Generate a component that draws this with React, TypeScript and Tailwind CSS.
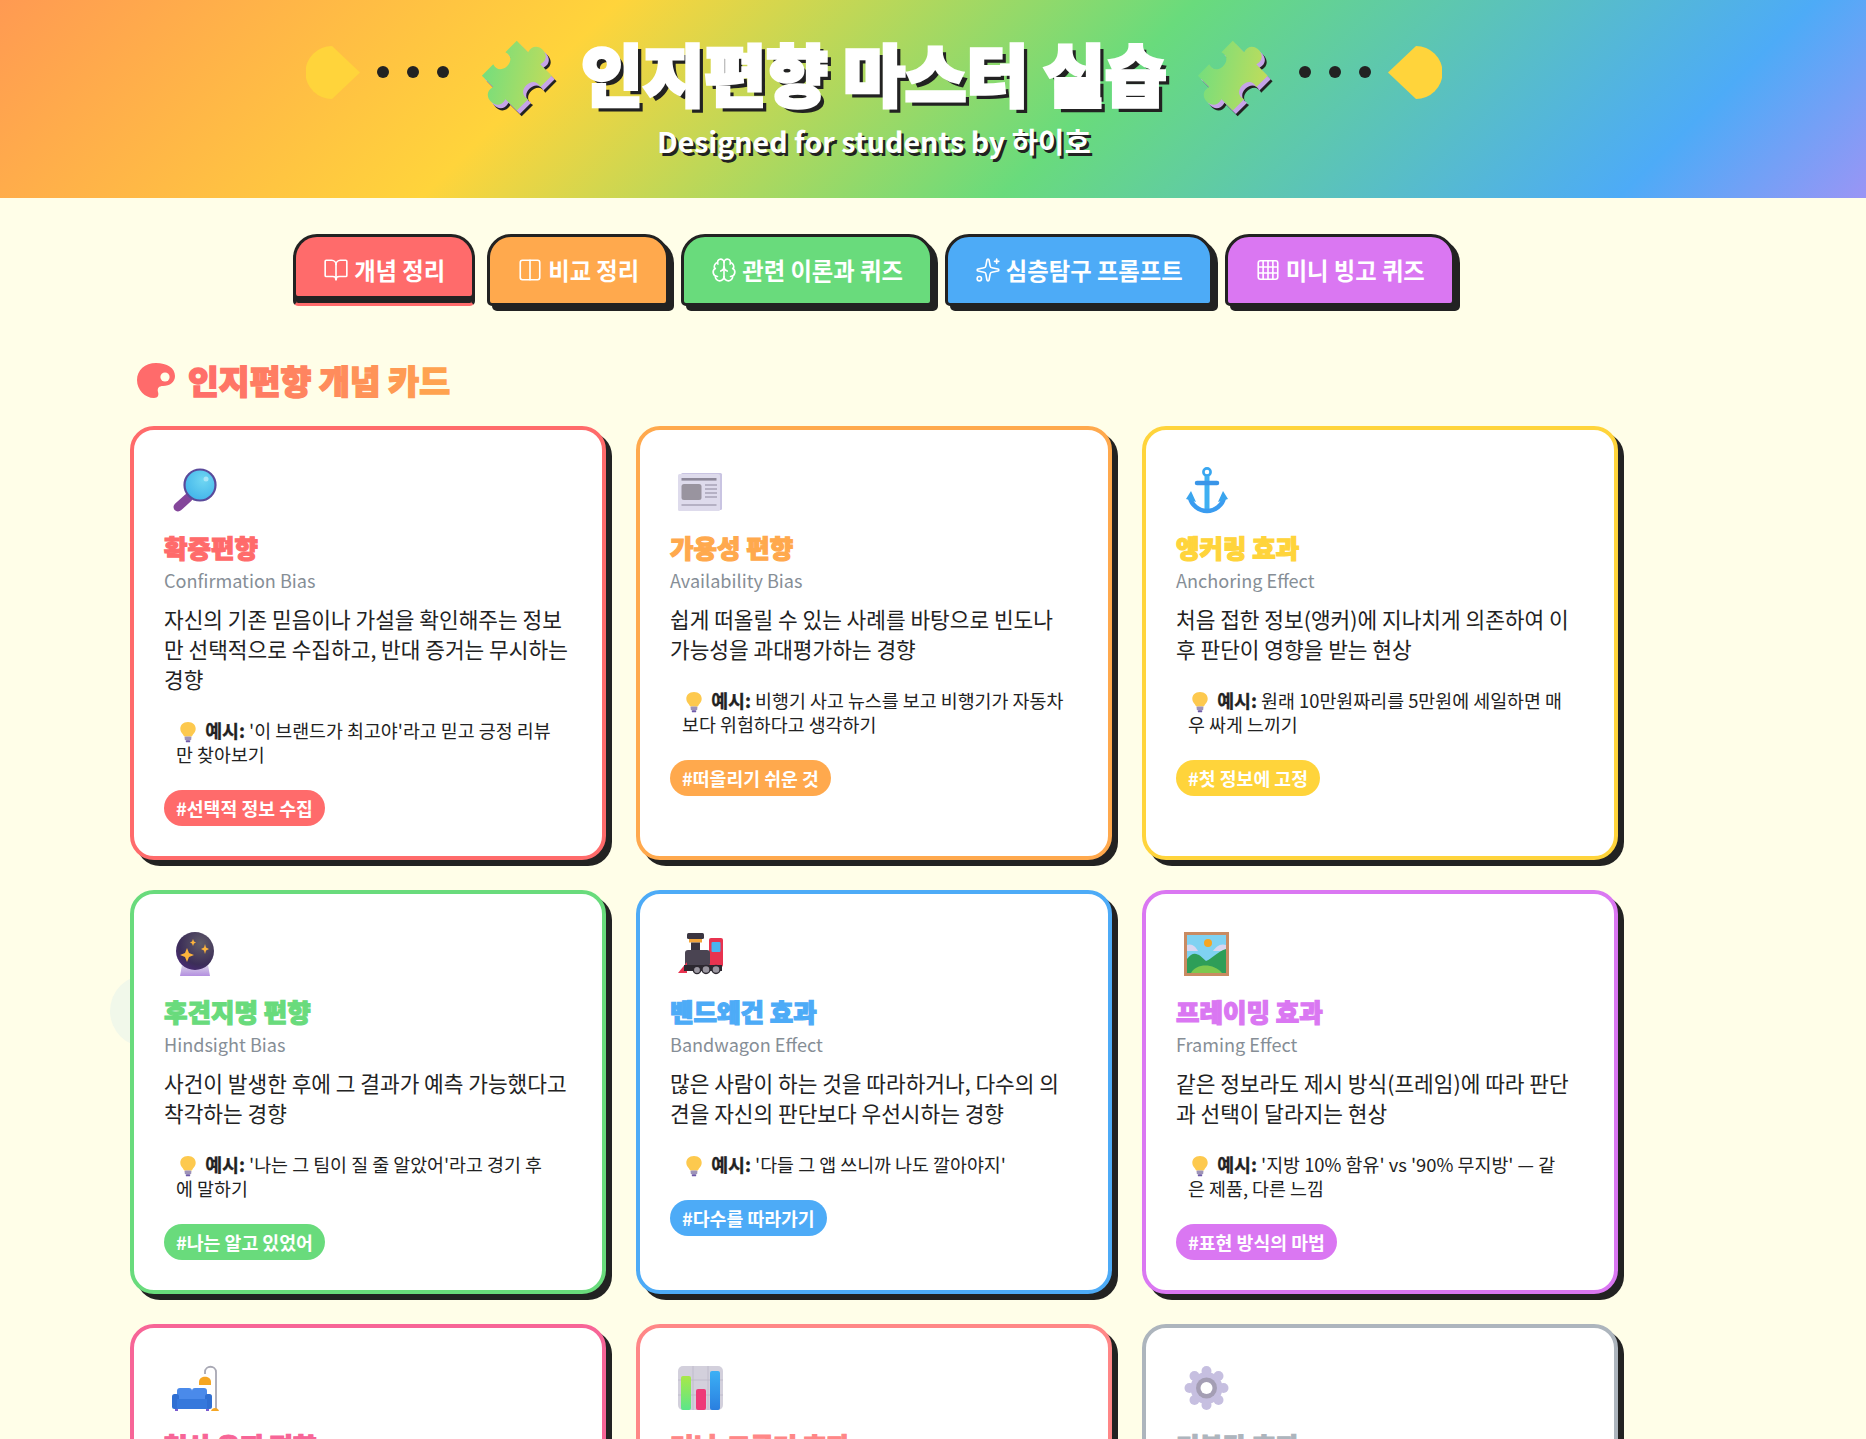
import { BookOpen, Brain, Columns2, Sparkles } from 'lucide-react'
import type { ReactNode } from 'react'

const IconBox = ({ children }: { children: ReactNode }) => (
  <svg viewBox="0 0 48 48" className="w-[48px] h-[48px] ml-2 mt-[7px] block">
    {children}
  </svg>
)

const Magnifier = () => (
  <IconBox>
    <defs>
      <radialGradient id="lens" cx="0.6" cy="0.35" r="0.7">
        <stop offset="0" stopColor="#6fd6f2" />
        <stop offset="1" stopColor="#41b4ea" />
      </radialGradient>
    </defs>
    <path d="M16 31 L6 40" stroke="#84469a" strokeWidth="9" strokeLinecap="round" />
    <circle cx="28" cy="18" r="15.5" fill="url(#lens)" stroke="#5a4a9a" strokeWidth="2.2" />
    <circle cx="34" cy="12" r="2.5" fill="#a8e6f8" />
  </IconBox>
)

const Newspaper = () => (
  <IconBox>
    <rect x="3" y="6" width="41" height="37" rx="1.5" fill="#c9c4e2" />
    <rect x="0" y="7" width="42" height="37" rx="1.5" fill="#dedbec" />
    <rect x="3.5" y="11" width="35" height="2.6" fill="#8d8899" />
    <rect x="3.5" y="17" width="20" height="16" rx="2.5" fill="#99949f" />
    <path d="M27 18h12M27 22h12M27 26h12M27 30h12M3.5 38h35" stroke="#a8a4b6" strokeWidth="1.3" />
  </IconBox>
)

const Anchor = () => (
  <IconBox>
    <circle cx="23" cy="5" r="3.6" fill="none" stroke="#38a6f0" strokeWidth="2.6" />
    <path d="M23 9 V43" stroke="#3fb0f2" strokeWidth="5" />
    <path d="M13 16 H33" stroke="#3a95e8" strokeWidth="4.5" strokeLinecap="round" />
    <path d="M6 30 C7 38 15 44 23 44 C31 44 39 38 40 30" fill="none" stroke="#3a9cf0" strokeWidth="4.5" />
    <path d="M2 32 L7 24 L12 35 Z M44 32 L39 24 L34 35 Z" fill="#3aa5ee" />
  </IconBox>
)

const CrystalBall = () => (
  <IconBox>
    <defs>
      <radialGradient id="ball" cx="0.65" cy="0.3" r="0.8">
        <stop offset="0" stopColor="#5f5b68" />
        <stop offset="0.7" stopColor="#3c2e58" />
        <stop offset="1" stopColor="#4a2a78" />
      </radialGradient>
      <linearGradient id="base" x1="0" y1="0" x2="0" y2="1">
        <stop offset="0" stopColor="#d9d2e8" />
        <stop offset="1" stopColor="#b48fe0" />
      </linearGradient>
    </defs>
    <path d="M10 34 H36 L38 45 H8 Z" fill="url(#base)" />
    <circle cx="23" cy="20" r="19" fill="url(#ball)" />
    <path d="M15 17 L17 22 L22 24 L17 26 L15 31 L13 26 L8 24 L13 22 Z" fill="#fdb43c" />
    <path d="M33 13 L34 16.5 L37 18 L34 19.5 L33 23 L32 19.5 L29 18 L32 16.5 Z" fill="#fdb43c" />
    <path d="M21 8 L22 10.5 L24 11.5 L22 12.5 L21 15 L20 12.5 L18 11.5 L20 10.5 Z" fill="#fdb43c" />
  </IconBox>
)

const Train = () => (
  <IconBox>
    <rect x="31" y="7" width="14" height="29" rx="2" fill="#e8334f" />
    <rect x="33.5" y="11" width="9" height="10" rx="1" fill="#49b4f0" />
    <rect x="9" y="2" width="17" height="6" rx="1.5" fill="#3a3540" />
    <rect x="11" y="8" width="13" height="3.5" fill="#f2a53a" />
    <rect x="13" y="11.5" width="9" height="8" fill="#3a3540" />
    <rect x="7" y="19" width="25" height="16" rx="3" fill="#4a4452" />
    <path d="M0 42 L9 31 L9 42 Z" fill="#e8334f" />
    <rect x="6" y="34" width="38" height="6" fill="#2c2830" />
    <circle cx="19" cy="39" r="3.6" fill="#9a96a0" stroke="#2c2830" strokeWidth="1.4" />
    <circle cx="28" cy="38.5" r="4" fill="#9a96a0" stroke="#2c2830" strokeWidth="1.4" />
    <circle cx="38" cy="38.5" r="4" fill="#9a96a0" stroke="#2c2830" strokeWidth="1.4" />
  </IconBox>
)

const Picture = () => (
  <IconBox>
    <rect x="0" y="1" width="45" height="44" fill="#c98b62" />
    <rect x="3" y="4" width="39" height="38" fill="#7fd2f2" />
    <circle cx="24" cy="12" r="4" fill="#f5a623" />
    <path d="M3 14 C8 12 12 16 14 20 L3 20 Z M42 14 C36 12 32 16 29 20 L42 20 Z" fill="#d8d6f0" />
    <path d="M3 28 C10 18 16 24 22 30 C28 28 34 20 42 18 V42 H3 Z" fill="#2e9e58" />
    <path d="M7 42 C12 32 30 32 38 42 Z" fill="#7cc84e" />
  </IconBox>
)

const Sofa = () => (
  <IconBox>
    <path d="M44 45 V7 C44 0 33 0 33 7 V9" fill="none" stroke="#a8a8b4" strokeWidth="1.8" />
    <path d="M27 17 C27 10 39 10 39 17 V20 H27 Z" fill="#f5a623" />
    <path d="M39 46 C40 42 46 42 47 46 Z" fill="#f5a623" />
    <rect x="5" y="23" width="15" height="14" rx="3" fill="#4a8aea" />
    <rect x="20" y="23" width="15" height="14" rx="3" fill="#4a8aea" />
    <rect x="0" y="29" width="7" height="15" rx="2.5" fill="#2f6fd2" />
    <rect x="33" y="29" width="7" height="15" rx="2.5" fill="#2f6fd2" />
    <rect x="5" y="34" width="30" height="10" fill="#3578dc" />
    <rect x="3" y="44" width="3" height="2" fill="#7a5cd0" />
    <rect x="34" y="44" width="3" height="2" fill="#7a5cd0" />
  </IconBox>
)

const BarChart = () => (
  <IconBox>
    <defs>
      <linearGradient id="barGreen" x1="0" y1="0" x2="0" y2="1">
        <stop offset="0" stopColor="#a8e848" />
        <stop offset="1" stopColor="#5ce68a" />
      </linearGradient>
      <linearGradient id="barBlue" x1="0" y1="0" x2="0" y2="1">
        <stop offset="0" stopColor="#3cb0f5" />
        <stop offset="1" stopColor="#2a7fe0" />
      </linearGradient>
    </defs>
    <rect x="0" y="1" width="45" height="44" rx="5" fill="#d3d0dc" />
    <path d="M15 1V45M30 1V45M0 15H45M0 30H45" stroke="#bcb8c8" strokeWidth="0.8" />
    <rect x="3" y="11" width="10" height="34" rx="2" fill="url(#barGreen)" />
    <rect x="18" y="24" width="10" height="21" rx="2" fill="#ee3a78" />
    <rect x="32" y="6" width="10" height="39" rx="2" fill="url(#barBlue)" />
  </IconBox>
)

const Gear = () => (
  <IconBox>
    <g fill="#c6bfe0">
      <circle cx="22.5" cy="23" r="16" />
      <circle cx="22.5" cy="6" r="5" />
      <circle cx="22.5" cy="40" r="5" />
      <circle cx="5.5" cy="23" r="5" />
      <circle cx="39.5" cy="23" r="5" />
      <circle cx="10.5" cy="11" r="5" />
      <circle cx="34.5" cy="11" r="5" />
      <circle cx="10.5" cy="35" r="5" />
      <circle cx="34.5" cy="35" r="5" />
    </g>
    <circle cx="22.5" cy="23" r="10.5" fill="#a49eb4" />
    <circle cx="22.5" cy="23" r="6" fill="#fff" />
  </IconBox>
)

const Bulb = () => (
  <svg viewBox="0 0 16 20" className="inline-block w-[18px] h-[22px] -my-[4px] ml-[3px] align-[-1px]">
    <path d="M8 1 C3.5 1 1 4 1 7.2 C1 10 3 11 4.5 14 H11.5 C13 11 15 10 15 7.2 C15 4 12.5 1 8 1 Z" fill="#fdc94e" />
    <rect x="5" y="14" width="6" height="3.4" rx="0.8" fill="#9d93b8" />
    <rect x="6" y="17.4" width="4" height="2" rx="0.8" fill="#6e5aa8" />
  </svg>
)

const Puzzle = ({ id }: { id: string }) => {
  const piece =
    'M-20,-20 L-7,-20 C-11,-33 11,-33 7,-20 L20,-20 L20,-7 C8,-11 8,11 20,7 L20,20 L7,20 C11,33 -11,33 -7,20 L-20,20 L-20,7 C-8,11 -8,-11 -20,-7 Z'
  return (
    <svg viewBox="-30 -34 60 60" className="w-[74px] h-[74px] shrink-0 overflow-visible">
      <defs>
        <linearGradient id={id} x1="0" y1="1" x2="1" y2="0">
          <stop offset="0" stopColor="#6ede80" />
          <stop offset="1" stopColor="#c6dc58" />
        </linearGradient>
      </defs>
      <path d={piece} transform="translate(3,3.6) rotate(45)" fill="#222" />
      <path d={piece} transform="translate(1.5,1.8) rotate(45)" fill="#c6a4e8" />
      <path d={piece} transform="translate(-1,-1) rotate(45)" fill={`url(#${id})`} />
    </svg>
  )
}

const Drop = ({ flip }: { flip?: boolean }) => (
  <svg viewBox="0 0 54 53" className={`w-[54px] h-[53px] shrink-0 ${flip ? '' : '-scale-x-100'}`}>
    <path d="M28 0 A26.5 26.5 0 0 1 28 53 L0 26.5 Z" fill="#ffd43b" />
  </svg>
)

const Dots = () => (
  <div className="flex gap-[18px] shrink-0">
    <span className="w-3 h-3 rounded-full bg-[#222]" />
    <span className="w-3 h-3 rounded-full bg-[#222]" />
    <span className="w-3 h-3 rounded-full bg-[#222]" />
  </div>
)

const Palette = () => (
  <svg viewBox="0 0 38 36" className="w-[38px] h-[36px] shrink-0">
    <path
      d="M19 1 C8 1 0 8 0 18 C0 28 8 36 17 36 C21 36 22 33 21 30 C20 26 22 24 26 24 C33 24 38 20 38 14 C38 6 30 1 19 1 Z"
      fill="#ff6b6b"
    />
    <circle cx="28" cy="15" r="4.6" fill="#fffee8" />
  </svg>
)

const GridIcon = () => (
  <svg viewBox="0 0 24 24" fill="none" stroke="currentColor" strokeWidth="1.5" className="w-[26px] h-[26px] shrink-0">
    <rect x="3" y="3.5" width="18" height="17" rx="2" />
    <path d="M7.5 3.5v17M12 3.5v17M16.5 3.5v17M3 9.2h18M3 14.8h18" />
  </svg>
)

const tabs = [
  { label: '개념 정리', bg: 'bg-[#ff6b6b]', icon: <BookOpen size={26} strokeWidth={1.5} />, active: true },
  { label: '비교 정리', bg: 'bg-[#ffa94d]', icon: <Columns2 size={26} strokeWidth={1.5} /> },
  { label: '관련 이론과 퀴즈', bg: 'bg-[#69db7c]', icon: <Brain size={26} strokeWidth={1.5} /> },
  { label: '심층탐구 프롬프트', bg: 'bg-[#4dabf7]', icon: <Sparkles size={26} strokeWidth={1.5} /> },
  { label: '미니 빙고 퀴즈', bg: 'bg-[#da77f2]', icon: <GridIcon /> },
]

// colour steps of the section heading, red to orange
const headingChars = [
  { ch: '인', color: 'text-[#ff6f69]' },
  { ch: '지', color: 'text-[#ff7666]' },
  { ch: '편', color: 'text-[#ff7d63]' },
  { ch: '향', color: 'text-[#ff8460]' },
  { ch: ' ', color: 'text-[#ff8460]' },
  { ch: '개', color: 'text-[#ff8c5c]' },
  { ch: '념', color: 'text-[#ff9358]' },
  { ch: ' ', color: 'text-[#ff9358]' },
  { ch: '카', color: 'text-[#ff9b54]' },
  { ch: '드', color: 'text-[#ffa350]' },
]

const cards = [
  {
    icon: <Magnifier />,
    title: '확증편향',
    en: 'Confirmation Bias',
    desc: '자신의 기존 믿음이나 가설을 확인해주는 정보만 선택적으로 수집하고, 반대 증거는 무시하는 경향',
    example: "'이 브랜드가 최고야'라고 믿고 긍정 리뷰만 찾아보기",
    tag: '#선택적 정보 수집',
    border: 'border-[#ff6b6b]',
    text: 'text-[#ff6b6b]',
    bg: 'bg-[#ff6b6b]',
  },
  {
    icon: <Newspaper />,
    title: '가용성 편향',
    en: 'Availability Bias',
    desc: '쉽게 떠올릴 수 있는 사례를 바탕으로 빈도나 가능성을 과대평가하는 경향',
    example: '비행기 사고 뉴스를 보고 비행기가 자동차보다 위험하다고 생각하기',
    tag: '#떠올리기 쉬운 것',
    border: 'border-[#ffa94d]',
    text: 'text-[#ffa94d]',
    bg: 'bg-[#ffa94d]',
  },
  {
    icon: <Anchor />,
    title: '앵커링 효과',
    en: 'Anchoring Effect',
    desc: '처음 접한 정보(앵커)에 지나치게 의존하여 이후 판단이 영향을 받는 현상',
    example: '원래 10만원짜리를 5만원에 세일하면 매우 싸게 느끼기',
    tag: '#첫 정보에 고정',
    border: 'border-[#ffd43b]',
    text: 'text-[#ffd43b]',
    bg: 'bg-[#ffd43b]',
  },
  {
    icon: <CrystalBall />,
    title: '후견지명 편향',
    en: 'Hindsight Bias',
    desc: '사건이 발생한 후에 그 결과가 예측 가능했다고 착각하는 경향',
    example: "'나는 그 팀이 질 줄 알았어'라고 경기 후에 말하기",
    tag: '#나는 알고 있었어',
    border: 'border-[#69db7c]',
    text: 'text-[#69db7c]',
    bg: 'bg-[#69db7c]',
  },
  {
    icon: <Train />,
    title: '밴드왜건 효과',
    en: 'Bandwagon Effect',
    desc: '많은 사람이 하는 것을 따라하거나, 다수의 의견을 자신의 판단보다 우선시하는 경향',
    example: "'다들 그 앱 쓰니까 나도 깔아야지'",
    tag: '#다수를 따라가기',
    border: 'border-[#4dabf7]',
    text: 'text-[#4dabf7]',
    bg: 'bg-[#4dabf7]',
  },
  {
    icon: <Picture />,
    title: '프레이밍 효과',
    en: 'Framing Effect',
    desc: '같은 정보라도 제시 방식(프레임)에 따라 판단과 선택이 달라지는 현상',
    example: "'지방 10% 함유' vs '90% 무지방' — 같은 제품, 다른 느낌",
    tag: '#표현 방식의 마법',
    border: 'border-[#da77f2]',
    text: 'text-[#da77f2]',
    bg: 'bg-[#da77f2]',
  },
  { icon: <Sofa />, title: '현상 유지 편향', border: 'border-[#f76597]', text: 'text-[#f76597]' },
  { icon: <BarChart />, title: '더닝-크루거 효과', border: 'border-[#ff8787]', text: 'text-[#ff8787]' },
  { icon: <Gear />, title: '기본값 효과', border: 'border-[#adb5bd]', text: 'text-[#adb5bd]' },
]

export default function App() {
  return (
    <div className="relative h-[1439px] overflow-hidden bg-[#fffee8] text-[#222] [font-family:'Noto_Sans_CJK_KR',sans-serif]">
      <div className="absolute left-[110px] top-[975px] w-[72px] h-[72px] rounded-full bg-[#f1f8ea]" />

      <header className="relative h-[198px] bg-[linear-gradient(135deg,#ff9a52_0%,#ffd43b_30%,#69db7c_58%,#4dabf7_88%,#9a95f5_100%)]">
        <div className="w-[1748px] pt-[35px]">
          <div className="flex items-center justify-center h-[74px]">
            <Drop />
            <div className="ml-[17px]"><Dots /></div>
            <div className="ml-[32px]"><Puzzle id="puzzleLeft" /></div>
            <h1 className="ml-[26px] mr-[30px] whitespace-nowrap text-[67px] leading-[74px] font-black text-white [-webkit-text-stroke:3.5px_#fff] [text-shadow:5px_5px_0_#222]">
              인지편향 마스터 실습
            </h1>
            <Puzzle id="puzzleRight" />
            <div className="ml-[28px]"><Dots /></div>
            <div className="ml-[17px]"><Drop flip /></div>
          </div>
          <p className="mt-[12px] text-center text-[28.6px] leading-[40px] font-bold text-white [text-shadow:2.5px_2.5px_0_#222]">
            Designed for students by 하이호
          </p>
        </div>
      </header>

      <main className="relative w-[1748px] pt-[36px]">
        <nav className="flex justify-center gap-[12px]">
          {tabs.map((tab) =>
            tab.active ? (
              <button
                key={tab.label}
                className={`flex items-center gap-[5px] h-[72px] px-[27px] rounded-t-[24px] rounded-b-[5px] border-[3.5px] border-[#222] border-b-[3px] border-b-[#ff6b6b] shadow-[inset_0_-7px_0_#222] text-white text-[23.3px] font-bold ${tab.bg}`}
              >
                {tab.icon}
                {tab.label}
              </button>
            ) : (
              <button
                key={tab.label}
                className={`flex items-center gap-[5px] h-[72px] px-[27px] rounded-t-[24px] rounded-b-[5px] border-[3.5px] border-[#222] shadow-[5px_5px_0_#222] text-white text-[23.3px] font-bold ${tab.bg}`}
              >
                {tab.icon}
                {tab.label}
              </button>
            ),
          )}
        </nav>

        <div className="w-[1488px] mx-auto">
          <h2 className="flex items-center gap-[13px] mt-[54px] ml-[7px] h-[40px]">
            <Palette />
            <span className="whitespace-pre text-[33.5px] leading-[40px] font-black [-webkit-text-stroke-width:1.5px]">
              {headingChars.map((c, i) => (
                <span key={i} className={c.color}>
                  {c.ch}
                </span>
              ))}
            </span>
          </h2>

          <div className="grid grid-cols-3 gap-[30px] mt-[26px]">
            {cards.map((card) => (
              <article
                key={card.title}
                className={`bg-white rounded-[24px] border-[4px] p-[30px] shadow-[6px_6px_0_#222] ${card.border}`}
              >
                <div className="h-[52px]">{card.icon}</div>
                <h3
                  className={`mt-[10px] text-[25.5px] leading-[36px] font-black [-webkit-text-stroke-width:1.2px] ${card.text}`}
                >
                  {card.title}
                </h3>
                {card.en && (
                  <>
                    <p className="mt-[2px] text-[18.1px] leading-[26px] text-[#868e96]">{card.en}</p>
                    <p className="mt-[11px] pr-[3px] text-[21.4px] leading-[30px] text-[#222]">{card.desc}</p>
                    <p className="mt-[12px] p-[12px] pr-[14px] text-[18.4px] leading-[24px] text-[#222]">
                      <Bulb /> <strong className="ml-[4px] font-bold [-webkit-text-stroke-width:0.3px]">예시:</strong> {card.example}
                    </p>
                    <span
                      className={`block w-fit mt-[12px] h-[36px] px-[12px] rounded-full text-white text-[18.3px] leading-[36px] font-bold ${card.bg}`}
                    >
                      {card.tag}
                    </span>
                  </>
                )}
              </article>
            ))}
          </div>
        </div>
      </main>
    </div>
  )
}
